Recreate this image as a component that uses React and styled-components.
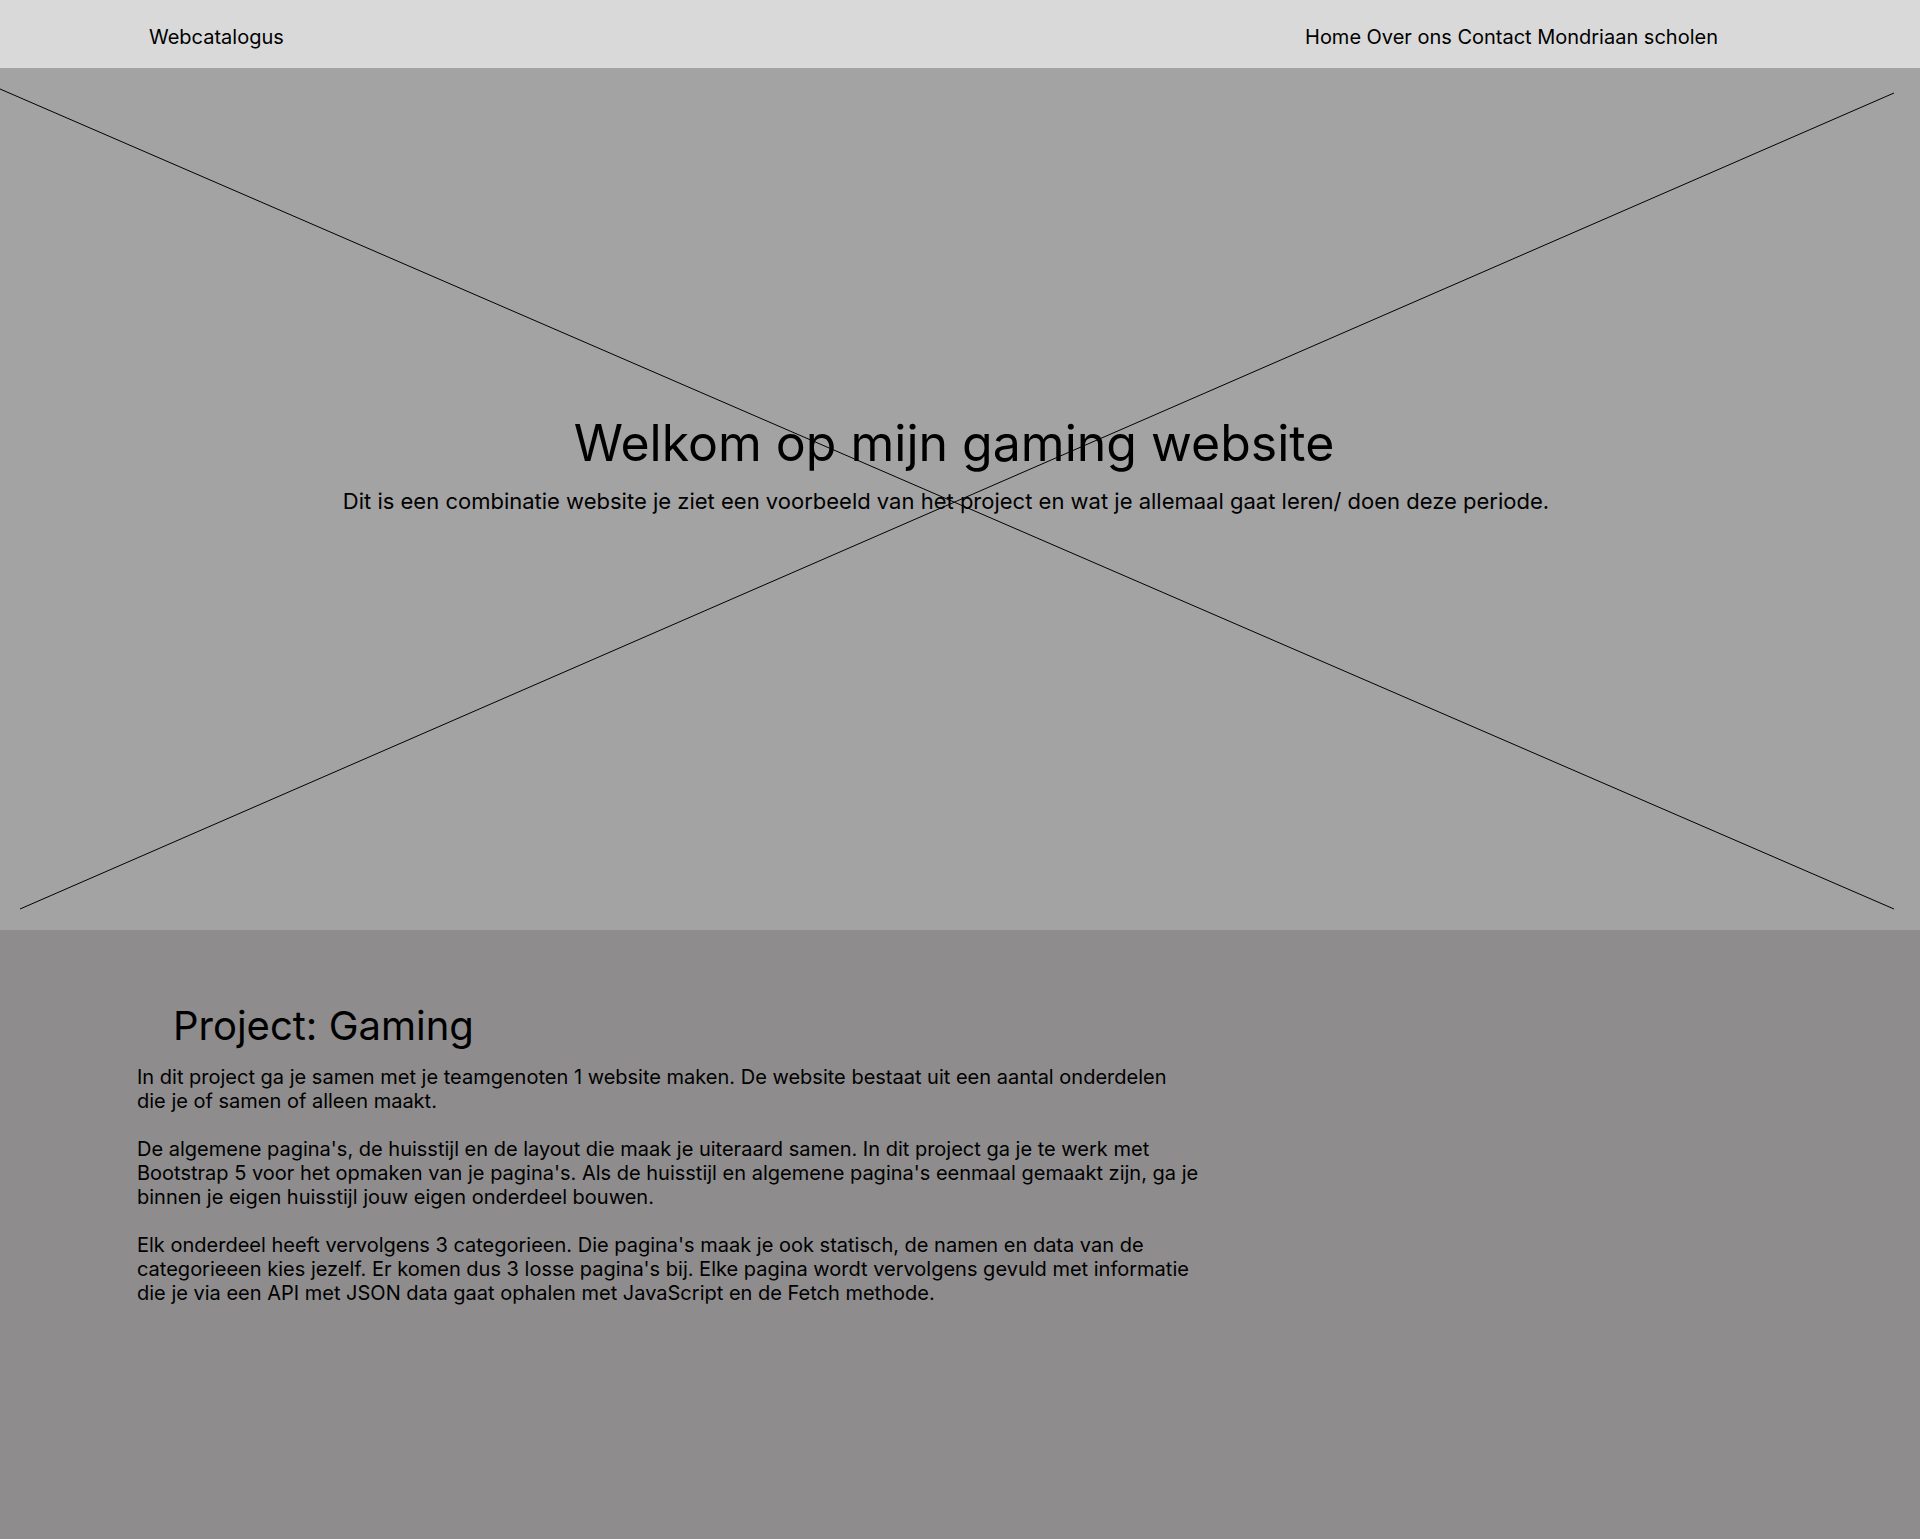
import styled, { createGlobalStyle } from "styled-components";

const GlobalStyle = createGlobalStyle`
  html, body {
    margin: 0;
    padding: 0;
    background: #8e8c8d;
  }
  body {
    font-family: Inter, "Noto Sans", "Liberation Sans", sans-serif;
    color: #000;
  }
`

const navItems = ["Home", "Over ons", "Contact", "Mondriaan scholen"];

const paragraphs = [
  "In dit project ga je samen met je teamgenoten 1 website maken. De website bestaat uit een aantal onderdelen die je of samen of alleen maakt.",
  "De algemene pagina's, de huisstijl en de layout die maak je uiteraard samen. In dit project ga je te werk met Bootstrap 5 voor het opmaken van je pagina's. Als de huisstijl en algemene pagina's eenmaal gemaakt zijn, ga je binnen je eigen huisstijl jouw eigen onderdeel bouwen.",
  "Elk onderdeel heeft vervolgens 3 categorieen. Die pagina's maak je ook statisch, de namen en data van de categorieeen kies jezelf. Er komen dus 3 losse pagina's bij. Elke pagina wordt vervolgens gevuld met informatie die je via een API met JSON data gaat ophalen met JavaScript en de Fetch methode.",
];

const App = () => {
  return (
    <>
      <GlobalStyle />
      <Header>
        <Brand>Webcatalogus</Brand>
        <Nav>
          {navItems.map((item) => (
            <NavLink key={item} href="#">{item}</NavLink>
          ))}
        </Nav>
      </Header>
      <Hero>
        <Placeholder viewBox="0 0 1920 862" preserveAspectRatio="none">
          <line x1="0" y1="21" x2="1894" y2="841" />
          <line x1="20" y1="841" x2="1894" y2="25" />
        </Placeholder>
        <HeroText>
          <HeroTitle>Welkom op mijn gaming website</HeroTitle>
          <HeroSub>
            Dit is een combinatie website je ziet een voorbeeld van het project en wat je allemaal gaat leren/ doen deze periode.
          </HeroSub>
        </HeroText>
      </Hero>
      <Project>
        <ProjectTitle>Project: Gaming</ProjectTitle>
        <ProjectBody>
          {paragraphs.map((p, i) => (
            <Paragraph key={i}>{p}</Paragraph>
          ))}
        </ProjectBody>
      </Project>
    </>
  )
}

export default App

const Header = styled.header`
  height: 68px;
  box-sizing: border-box;
  background: #d9d9d9;
  display: flex;
  align-items: center;
  justify-content: space-between;
  padding: 5px 202px 0 149px;
  font-size: 20px;
`

const Brand = styled.div`
  font-size: 20px;
`

const Nav = styled.nav`
  display: flex;
  gap: 5.5px;
`

const NavLink = styled.a`
  color: #000;
  text-decoration: none;
  font-size: 20px;
`

const Hero = styled.section`
  position: relative;
  height: 862px;
  background: #a3a3a3;
  box-sizing: border-box;
  padding-top: 345px;
`

const Placeholder = styled.svg`
  position: absolute;
  inset: 0;
  width: 100%;
  height: 100%;
  stroke: #000;
  stroke-width: 1;
`

const HeroText = styled.div`
  position: relative;
  display: flex;
  flex-direction: column;
  align-items: center;
  gap: 15px;
`

const HeroTitle = styled.h1`
  margin: 0;
  padding-right: 12px;
  font-size: 50px;
  font-weight: 400;
`

const HeroSub = styled.p`
  margin: 0;
  padding-right: 28px;
  font-size: 22px;
`

const Project = styled.section`
  background: #8e8c8d;
  min-height: 609px;
  box-sizing: border-box;
  padding: 71px 0 0 137px;
`

const ProjectTitle = styled.h2`
  margin: 0 0 15px 36px;
  font-size: 40px;
  font-weight: 400;
`

const ProjectBody = styled.div`
  width: 1062px;
  display: flex;
  flex-direction: column;
  gap: 24px;
`

const Paragraph = styled.p`
  margin: 0;
  font-size: 20px;
  line-height: 24px;
`
